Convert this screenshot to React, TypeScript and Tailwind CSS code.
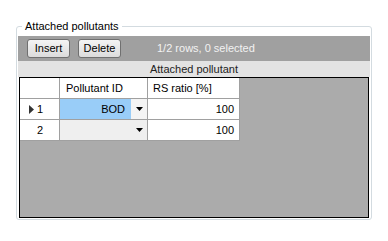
import React from 'react';

const rows = [
  { id: 1, pollutant: 'BOD', ratio: '100', current: true },
  { id: 2, pollutant: '', ratio: '100', current: false },
];

const DropArrow = () => (
  <svg width="7" height="4" viewBox="0 0 7 4" className="block">
    <path d="M0 0h7L3.5 4z" fill="#000" />
  </svg>
);

const CurrentArrow = () => (
  <svg width="5" height="9" viewBox="0 0 5 9" className="block">
    <path d="M0 0l5 4.5L0 9z" fill="#333" />
  </svg>
);

const ToolButton = ({ label }: { label: string }) => (
  <button className="w-[43px] h-[19px] rounded-[3px] border border-[#707070] bg-gradient-to-b from-[#f4f4f4] to-[#dcdcdc] text-[11px] leading-none text-black">
    {label}
  </button>
);

export default function App() {
  return (
    <div
      className="w-[388px] h-[241px] bg-white overflow-hidden pt-[26px] pl-[16px]"
      style={{ fontFamily: '"Liberation Sans", Arial, sans-serif' }}
    >
      <div className="relative w-[356px] h-[194px] border border-[#d3dbe0] rounded-[3px] px-px pt-[9px]">
        <span className="absolute -top-[8px] left-[5px] bg-white px-[3px] text-[11px] leading-[14px] text-black">
          Attached pollutants
        </span>

        <div className="h-[25px] bg-[#a0a0a0] flex items-center pl-[9px]">
          <ToolButton label="Insert" />
          <div className="w-[8px]" />
          <ToolButton label="Delete" />
          <span className="ml-[36px] text-[11px] text-[#f2f2f2]">1/2 rows, 0 selected</span>
        </div>

        <div className="h-[16px] bg-[#e3e3e3] flex items-center justify-center text-[11px] text-[#222]">
          Attached pollutant
        </div>

        <div className="mx-px h-[141px] border border-black bg-[#ababab] text-[11px] text-black">
          <div className="flex">
            <div className="w-[40px] h-[21px] bg-white border-r border-b border-[#a0a0a0]" />
            <div className="w-[88px] h-[21px] bg-white border-r border-b border-[#a0a0a0] flex items-center pl-[6px]">
              Pollutant ID
            </div>
            <div className="w-[92px] h-[21px] bg-white border-r border-b border-[#a0a0a0] flex items-center pl-[5px]">
              RS ratio [%]
            </div>
          </div>
          {rows.map((r) => (
            <div key={r.id} className="flex">
              <div className="w-[40px] h-[21px] bg-white border-r border-b border-[#a0a0a0] flex items-center">
                <div className="w-[17px] flex justify-end pr-[3px]">{r.current && <CurrentArrow />}</div>
                <span>{r.id}</span>
              </div>
              <div
                className={`w-[88px] h-[21px] border-r border-b border-[#a0a0a0] flex ${
                  r.current ? 'bg-[#99cdf8]' : 'bg-[#efefef]'
                }`}
              >
                <div className="flex-1 flex items-center justify-end pr-[6px]">{r.pollutant}</div>
                <div
                  className={`w-[16px] flex items-center justify-center ${
                    r.current ? 'bg-[#f4f4f4]' : ''
                  }`}
                >
                  <DropArrow />
                </div>
              </div>
              <div className="w-[92px] h-[21px] bg-white border-r border-b border-[#a0a0a0] flex items-center justify-end pr-[5px]">
                {r.ratio}
              </div>
            </div>
          ))}
        </div>
      </div>
    </div>
  );
}
